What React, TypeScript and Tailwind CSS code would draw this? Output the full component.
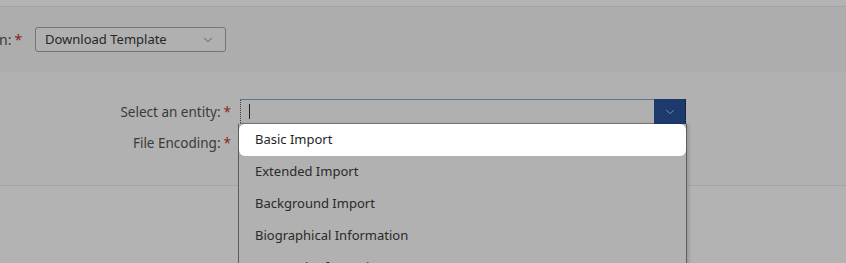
import { ChevronDown } from 'lucide-react';

const items = [
  'Basic Import',
  'Extended Import',
  'Background Import',
  'Biographical Information',
  'Personal Information',
];

function Req() {
  return <span className="text-[#8a1f1f] ml-[3px]">*</span>;
}

export default function App() {
  return (
    <div className="w-[846px] h-[263px] overflow-hidden bg-[#b3b3b3] font-['Noto_Sans',sans-serif] text-[13px] text-[#262626]">
      <div className="h-[7px] border-b border-[#a2a2a2]" />

      <div className="h-[65px] bg-[#adadad] flex items-center">
        <div className="w-[35px] flex items-center text-[#3a3a3a] text-[14px]">
          <span className="-ml-[1px]">n:</span>
          <Req />
        </div>
        <button className="w-[191px] h-[25px] flex items-center justify-between pl-[9px] pr-[10px] border border-[#747474] rounded-[3px] bg-[#b0b0b0] text-[#262626] text-[13px]">
          <span>Download Template</span>
          <ChevronDown className="w-[14px] h-[14px] text-[#33507a]" strokeWidth={1.5} />
        </button>
      </div>

      <div className="h-[114px] bg-[#b1b1b1] border-b border-[#a4a4a4] pt-[27px]">
        <div className="flex items-center h-[26px]">
          <div className="w-[240px] text-right text-[#3a3a3a] pr-[9px] text-[13.5px]">
            Select an entity:<Req />
          </div>
          <div className="relative w-[446px]">
            <div className="h-[26px] flex border-t border-[#5f7494] border-b-2 border-b-[#7a7a7a] bg-[#b0b0b0]">
              <div className="flex-1 flex items-center border-l border-dotted border-[#3d3d3d]">
                <span className="ml-[8px] w-px h-[15px] bg-[#222]" />
              </div>
              <div className="w-[32px] h-[25px] -mt-px bg-[#1c3a6b] flex items-center justify-center border-r border-dotted border-[#111]">
                <ChevronDown className="w-[14px] h-[14px] text-[#8797b3]" strokeWidth={1.5} />
              </div>
            </div>

            <div className="absolute left-[-2px] top-[25px] w-[449px] h-[200px] border-l border-r border-[#5e5e5e] bg-[#b1b1b1] shadow-[2px_0_3px_rgba(0,0,0,0.15)]">
              {items.map((item, i) => (
                <div
                  key={item}
                  className={`h-[32px] flex items-center pl-[16px] ${
                    i === 0 ? 'bg-white rounded-[6px] text-[#1f1f1f]' : 'text-[#2a2a2a]'
                  }`}
                >
                  {item}
                </div>
              ))}
            </div>
          </div>
        </div>
        <div className="flex items-center h-[26px] mt-[5px]">
          <div className="w-[240px] text-right text-[#3a3a3a] pr-[9px] text-[13.5px]">
            File Encoding:<Req />
          </div>
        </div>
      </div>
    </div>
  );
}
